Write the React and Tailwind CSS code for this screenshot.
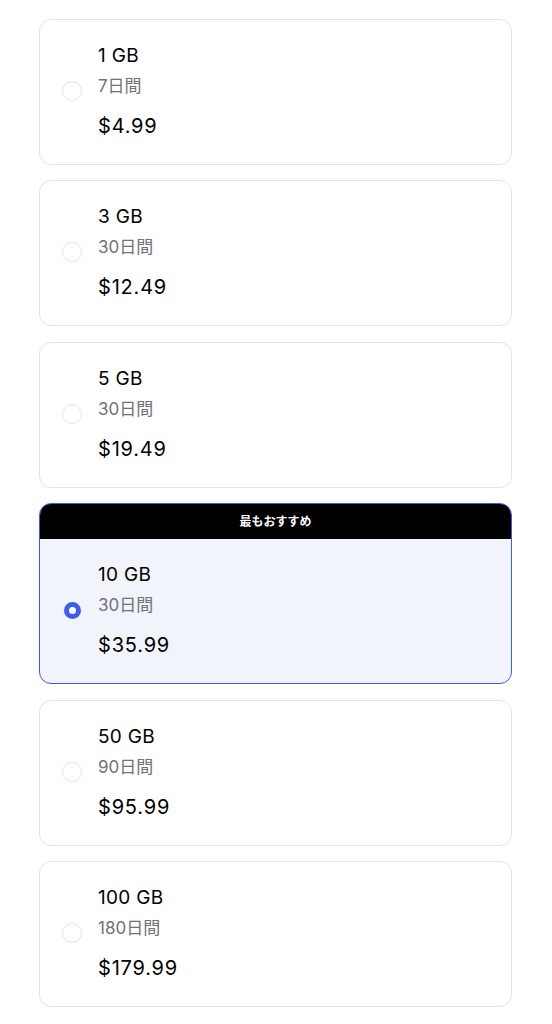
import React, { useState } from "react";

const plans = [
  { id: 1, size: "1 GB", days: "7日間", price: "$4.99" },
  { id: 3, size: "3 GB", days: "30日間", price: "$12.49" },
  { id: 5, size: "5 GB", days: "30日間", price: "$19.49" },
  { id: 10, size: "10 GB", days: "30日間", price: "$35.99", featured: true },
  { id: 50, size: "50 GB", days: "90日間", price: "$95.99" },
  { id: 100, size: "100 GB", days: "180日間", price: "$179.99" },
];

const latin = { fontFamily: "Inter, 'Noto Sans CJK JP', sans-serif" };

function Radio({ checked }) {
  return (
    <div className="w-5 h-5 flex items-center justify-center shrink-0">
      {checked ? (
        <div className="w-[17px] h-[17px] rounded-full border-[5px] border-[#3d5cf5] bg-white" />
      ) : (
        <div className="w-5 h-5 rounded-full border-[1.5px] border-[#e3e4e6] bg-white" />
      )}
    </div>
  );
}

function PlanBody({ plan, checked }) {
  return (
    <div className="flex items-center pl-[22px] pt-[22px] pb-6">
      <Radio checked={checked} />
      <div className="ml-4 flex flex-col" style={latin}>
        <span className="text-[19px] leading-7 text-black tracking-[0.3px]">
          {plan.size}
        </span>
        <span className="mt-1 text-[17px] leading-6 text-[#6f7278]">
          {plan.days}
        </span>
        <span className="mt-[14px] text-[20px] leading-7 text-black tracking-[0.8px]">
          {plan.price}
        </span>
      </div>
    </div>
  );
}

export default function App() {
  const [selected, setSelected] = useState(10);

  return (
    <div className="min-h-screen bg-white pt-[19px] pl-[39px] pr-10 flex flex-col gap-[15.4px]">
      {plans.map((plan) =>
        plan.featured ? (
          <div
            key={plan.id}
            onClick={() => setSelected(plan.id)}
            className="rounded-xl border border-[#3b5cf0] overflow-hidden bg-[#f1f4fa] cursor-pointer"
          >
            <div
              className="h-[35px] bg-black text-white text-[12px] font-semibold flex items-center justify-center"
              style={latin}
            >
              最もおすすめ
            </div>
            <PlanBody plan={plan} checked={selected === plan.id} />
          </div>
        ) : (
          <div
            key={plan.id}
            onClick={() => setSelected(plan.id)}
            className="rounded-xl border border-[#e2e3e5] bg-white cursor-pointer"
          >
            <PlanBody plan={plan} checked={selected === plan.id} />
          </div>
        )
      )}
    </div>
  );
}
